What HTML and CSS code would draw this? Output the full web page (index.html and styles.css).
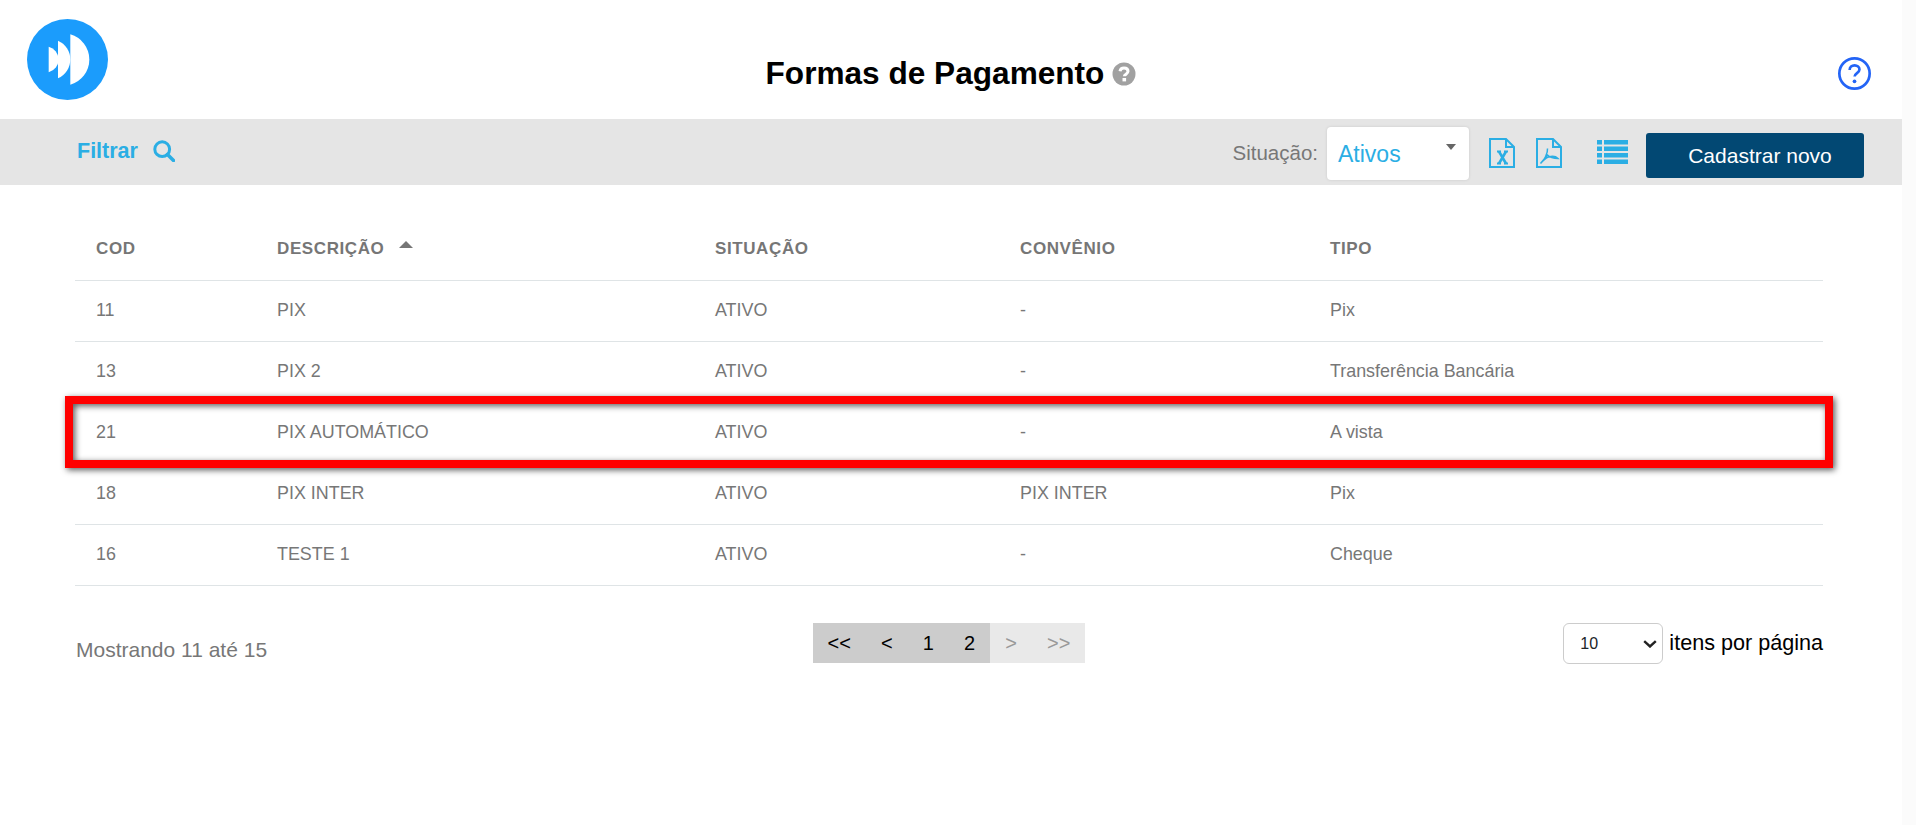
FILE: index.html
```html
<!DOCTYPE html>
<html lang="pt-BR">
<head>
<meta charset="utf-8">
<title>Formas de Pagamento</title>
<link rel="stylesheet" href="styles.css">
</head>
<body>
<div class="page">
  <header class="top">
    <div class="logo-cell">
      <svg class="logo" viewBox="0 0 81 81" aria-label="Logo">
        <circle cx="40.5" cy="40.5" r="40.5" fill="#1b9cfc"/>
        <path fill="#fff" d="M21.7 27.8A13.1 13.1 0 0 1 21.7 53.2Z"/>
        <path fill="#fff" d="M31 21.7A20.5 20.5 0 0 1 31 59.3Z"/>
        <path fill="#fff" d="M43.3 15.3A26.2 26.2 0 0 1 43.3 65.7Z"/>
      </svg>
    </div>
    <div class="title-wrap">
      <h1 class="title">Formas de Pagamento</h1>
      <svg class="title-help" viewBox="0 0 24 24">
        <circle cx="12" cy="12" r="11.5" fill="#a1a1a1"/>
        <path d="M8 9.2C8.4 7 10 6 12 6c2.4 0 4 1.4 4 3.3 0 2.9-3.6 2.7-3.6 5" fill="none" stroke="#fff" stroke-width="3"/>
        <rect x="10.5" y="16" width="3.6" height="3.4" fill="#fff"/>
      </svg>
    </div>
    <div class="help-cell">
      <svg class="help" viewBox="0 0 32 32">
        <circle cx="16" cy="16" r="14.7" fill="none" stroke="#2364f6" stroke-width="2.6"/>
        <path d="M11.3 12.6c0-2.8 2.1-4.5 4.8-4.5s4.7 1.7 4.7 4.1c0 3.4-4.7 3.5-4.7 6.8" fill="none" stroke="#2364f6" stroke-width="2.6"/>
        <circle cx="16" cy="23.6" r="1.8" fill="#2364f6"/>
      </svg>
    </div>
  </header>

  <div class="toolbar">
    <a class="filter">Filtrar
      <svg class="search" viewBox="0 0 22 22">
        <circle cx="9.2" cy="9.2" r="7.4" fill="none" stroke="#2baee4" stroke-width="3"/>
        <path d="M14.5 14.5L20.5 20.5" stroke="#2baee4" stroke-width="3.6" stroke-linecap="round"/>
      </svg>
    </a>
    <div class="tools">
      <span class="status-label">Situação:</span>
      <div class="status-select">Ativos<span class="caret"></span></div>
      <svg class="doc-icon doc-x" viewBox="0 0 26 30">
        <path d="M1 1H17L25 9V29H1Z" fill="none" stroke="#2baee4" stroke-width="2"/>
        <path d="M17 1V9H25" fill="none" stroke="#2baee4" stroke-width="2"/>
        <path d="M8 13.5H12M15 13.5H19M8 25.5H12M15 25.5H19" stroke="#2baee4" stroke-width="1.8"/>
        <path d="M10 13.5L17 25.5M17 13.5L10 25.5" stroke="#2baee4" stroke-width="2.6"/>
      </svg>
      <svg class="doc-icon doc-p" viewBox="0 0 26 30">
        <path d="M1 1H17L25 9V29H1Z" fill="none" stroke="#2baee4" stroke-width="2"/>
        <path d="M17 1V9H25" fill="none" stroke="#2baee4" stroke-width="2"/>
        <path d="M4.500 25.500C8 23 12 15 11.500 10.500M11.500 17C13.500 19 17 20.500 22 20.500C20 18.500 16 18 12.500 19C9.500 20 7 22.500 4.500 25.500Z" fill="none" stroke="#2baee4" stroke-width="1.5"/>
      </svg>
      <svg class="list-icon" viewBox="0 0 31 24">
        <path fill="#2baee4" d="M0 0H5V4.500H0ZM7 0H31V4.500H7ZM0 6.500H5V11H0ZM7 6.500H31V11H7ZM0 13H5V17.500H0ZM7 13H31V17.500H7ZM0 19.500H5V24H0ZM7 19.500H31V24H7Z"/>
      </svg>
      <button class="new-btn">Cadastrar novo</button>
    </div>
  </div>

  <main class="content">
    <div class="table-wrap">
      <table class="grid">
        <thead>
          <tr>
            <th class="c-cod">COD</th>
            <th class="c-desc">DESCRIÇÃO<span class="sort"></span></th>
            <th class="c-sit">SITUAÇÃO</th>
            <th class="c-conv">CONVÊNIO</th>
            <th>TIPO</th>
          </tr>
        </thead>
        <tbody>
          <tr><td>11</td><td>PIX</td><td>ATIVO</td><td>-</td><td>Pix</td></tr>
          <tr><td>13</td><td>PIX 2</td><td>ATIVO</td><td>-</td><td>Transferência Bancária</td></tr>
          <tr><td>21</td><td>PIX AUTOMÁTICO</td><td>ATIVO</td><td>-</td><td>A vista</td></tr>
          <tr><td>18</td><td>PIX INTER</td><td>ATIVO</td><td>PIX INTER</td><td>Pix</td></tr>
          <tr><td>16</td><td>TESTE 1</td><td>ATIVO</td><td>-</td><td>Cheque</td></tr>
        </tbody>
      </table>
      <div class="highlight"></div>
    </div>

    <div class="footer">
      <div class="showing">Mostrando 11 até 15</div>
      <nav class="pager">
        <a>&lt;&lt;</a><a>&lt;</a><a>1</a><a>2</a><a class="off">&gt;</a><a class="off">&gt;&gt;</a>
      </nav>
      <div class="per-page">
        <div class="per-box">
          <select class="per-select"><option>10</option></select>
          <svg class="chevron" viewBox="0 0 14 8"><path d="M1.200 1.200L7 6.500L12.800 1.200" fill="none" stroke="#222" stroke-width="2.400"/></svg>
        </div>
        <span>itens por página</span>
      </div>
    </div>
  </main>
</div>
<div class="gutter"></div>
</body>
</html>
```
FILE: styles.css
```css
* { box-sizing: border-box; }
html, body { margin: 0; height: 100%; }
body {
  display: flex;
  height: 825px;
  overflow: hidden;
  background: #fff;
  font-family: "Liberation Sans", Arial, sans-serif;
}
.page { flex: 1; min-width: 0; }
.gutter { width: 14px; background: #fbfbfb; }

.top {
  height: 119px;
  display: grid;
  grid-template-columns: 1fr auto 1fr;
}
.logo-cell { padding: 19px 0 0 27px; }
.logo { display: block; width: 81px; height: 81px; }
.title-wrap {
  display: flex;
  align-items: center;
  gap: 8px;
  padding-top: 28px;
}
.title {
  margin: 0;
  font-size: 31.600px;
  font-weight: 700;
  color: #000;
}
.title-help { width: 24px; height: 24px; }
.help-cell {
  display: flex;
  justify-content: flex-end;
  padding: 57px 31px 0 0;
}
.help { width: 33px; height: 33px; }

.toolbar {
  height: 66px;
  background: #e5e5e5;
  display: flex;
  align-items: center;
  justify-content: space-between;
  padding: 0 38px 0 77px;
}
.filter {
  display: flex;
  align-items: center;
  gap: 15px;
  margin-top: -2px;
  font-size: 21.500px;
  font-weight: 700;
  color: #2baee4;
}
.search { width: 22px; height: 22px; }
.tools { display: flex; align-items: center; }
.status-label { font-size: 20.500px; color: #777; margin-right: 9px; margin-top: 1px; }
.status-select {
  position: relative;
  width: 142px;
  height: 53px;
  margin-top: 3px;
  padding: 14px 0 0 11px;
  background: #fff;
  border-radius: 4px;
  box-shadow: 0 0 3px rgba(0, 0, 0, .12);
  font-size: 23px;
  color: #2baee4;
}
.caret {
  position: absolute;
  top: 17px;
  right: 13px;
  border-style: solid;
  border-width: 6px 5.500px 0;
  border-color: #666 transparent transparent;
}
.doc-icon { width: 26px; height: 30px; margin-top: 2px; }
.doc-x { margin-left: 20px; }
.doc-p { margin-left: 21px; }
.list-icon { width: 31px; height: 24px; margin: 0 18px 0 35px; }
.new-btn {
  width: 218px;
  height: 45px;
  margin-top: 7px;
  padding-left: 16px;
  border: 0;
  border-radius: 3px;
  background: #024873;
  color: #fff;
  font: 21px "Liberation Sans", Arial, sans-serif;
}

.content { padding: 31px 79px 0 75px; }
.table-wrap { position: relative; }
.grid {
  width: 100%;
  table-layout: fixed;
  border-collapse: collapse;
  font-size: 17.900px;
  color: #777;
}
.c-cod { width: 181px; }
.c-desc { width: 438px; }
.c-sit { width: 305px; }
.c-conv { width: 310px; }
.grid th {
  height: 64px;
  padding: 2px 21px 0;
  text-align: left;
  font-size: 17px;
  font-weight: 700;
  letter-spacing: .6px;
  color: #767676;
  border-bottom: 1px solid #dfe4e6;
}
.grid td {
  height: 61px;
  padding: 0 21px;
  border-bottom: 1px solid #dfe4e6;
}
.sort {
  display: inline-block;
  margin-left: 15px;
  vertical-align: 6px;
  border-style: solid;
  border-width: 0 7px 7px;
  border-color: transparent transparent #767676;
}
.highlight {
  position: absolute;
  left: -10px;
  right: -10px;
  top: 180px;
  height: 72px;
  border: 8px solid #f00;
  filter: drop-shadow(2px 2px 3px rgba(0, 0, 0, .65));
}

.footer {
  display: grid;
  grid-template-columns: 1fr auto 1fr;
  align-items: start;
  margin-top: 37px;
}
.showing { font-size: 21px; color: #777; padding: 15px 0 0 1px; }
.pager { display: flex; background: #ccc; font-size: 20px; color: #000; }
.pager a { padding: 9px 15.050px; line-height: 22px; }
.pager .off { background: #e9e9e9; color: #999; }
.per-page {
  display: flex;
  justify-content: flex-end;
  align-items: center;
  gap: 6px;
  font-size: 21.600px;
  color: #000;
}
.per-box { position: relative; height: 41px; }
.per-select {
  appearance: none;
  display: block;
  width: 100px;
  height: 41px;
  padding-left: 16px;
  background: #fff;
  border: 1px solid #ccc;
  border-radius: 6px;
  font: 16px "Liberation Sans", Arial, sans-serif;
  color: #212529;
}
.chevron {
  position: absolute;
  top: 17px;
  right: 6px;
  width: 14px;
  height: 8px;
  pointer-events: none;
}
```
